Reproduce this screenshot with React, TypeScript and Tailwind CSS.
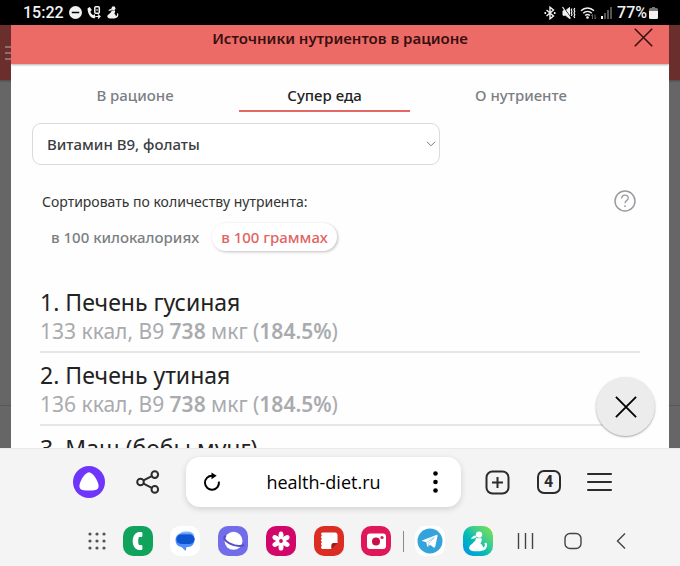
import { useState } from 'react';
import { clsx } from 'clsx';

const tabs = ['В рационе', 'Супер еда', 'О нутриенте'];

const sortModes = ['в 100 килокалориях', 'в 100 граммах'];

const foods = [
  { name: 'Печень гусиная', kcal: 133, amount: 738, percent: '184.5%' },
  { name: 'Печень утиная', kcal: 136, amount: 738, percent: '184.5%' },
  { name: 'Маш (бобы мунг)', kcal: 347, amount: 625, percent: '156.3%' },
];

const Figure = ({ className }: { className?: string }) => (
  <svg viewBox="0 0 20 20" className={className} fill="currentColor" aria-hidden="true">
    <circle cx="11.500" cy="3.400" r="3" />
    <path d="M9.800 4.500C7 3.800 4.800 5 3.800 7.600c1.600-.2 3.400-.4 4.600-1.400z" />
    <path d="M8.600 6.400c2 .8 3.600.6 5.200.2.500 2 .1 3.800-1 5.200 1.500.9 2.300 2.200 2.500 3.900 1.300-.4 1.900-1.400 1.700-2.900l-.4-1.400 2-.3c1.100 3.200-.1 6.500-3.200 7.400-3.200 1-8.600 1.100-11.200.2-2.400-.9-2.600-2.800-1.600-4.400.9-1.400 2.600-2 3.800-3.500 1.400-1.600 2.100-2.600 2.200-4.400z" />
  </svg>
);

const Cross = ({ className }: { className?: string }) => (
  <svg viewBox="0 0 24 24" className={className} fill="none" stroke="currentColor" strokeWidth="2" aria-hidden="true">
    <path d="M1 1 23 23M23 1 1 23" />
  </svg>
);

const StatusBar = () => (
  <div className="flex h-[25px] shrink-0 items-center justify-between bg-black pr-[22px] pl-[23px] font-['Roboto',sans-serif] text-base font-medium text-[#f2f2f2]">
    <div className="flex items-center gap-[5px]">
      <span>15:22</span>
      <svg viewBox="0 0 14 14" className="size-[13px]" aria-hidden="true">
        <circle cx="7" cy="7" r="7" fill="currentColor" />
        <path d="M3 7h8" stroke="#000" strokeWidth="1.600" />
      </svg>
      <svg viewBox="0 0 14 14" className="size-[14px]" fill="none" stroke="currentColor" aria-hidden="true">
        <path d="M.6 2.200 2.800 1l2 3-1.400 1.400c.4 1.800 1.400 3 2.800 3.800L7.600 8l1 3-1.400 1.400C3.600 12 .4 7.400.6 2.200z" fill="currentColor" stroke="none" />
        <rect x="7.800" y=".8" width="4.500" height="6.500" rx="1" strokeWidth="1.500" />
        <path d="M9 4h2M8.500 10.500h4.500M11 8.500l2 2-2 2" strokeWidth="1.200" />
      </svg>
      <Figure className="size-[13px]" />
    </div>
    <div className="flex items-center gap-1">
      <svg viewBox="0 0 12 14" className="h-[14px] w-[12px]" fill="none" stroke="currentColor" strokeWidth="1.400" aria-hidden="true">
        <path d="m2.500 4 7 6L6 12.800V1.200L9.500 4l-7 6" />
        <path d="M.5 7h1.600M9.900 7h1.600" strokeWidth="1.800" />
      </svg>
      <svg viewBox="0 0 14 14" className="ml-[2px] size-[14px]" fill="none" stroke="currentColor" aria-hidden="true">
        <path d="M1 4.800h2.500L7.500 1.500v11L3.500 9.200H1z" fill="currentColor" />
        <path d="m1.500 1 7.500 11" stroke="#000" />
        <path d="m.5 1 8 11.500" strokeWidth="1.200" />
        <path d="m10 2.500-.8 1.500.8 1.500-.8 1.500.8 1.500-.8 1.500M12.800 2l-.8 1.700.8 1.600-.8 1.700.8 1.700-.8 1.600.8 1.700" strokeWidth="1.200" />
      </svg>
      <svg viewBox="0 0 17 14" className="h-[14px] w-[17px]" fill="none" stroke="currentColor" aria-hidden="true">
        <path d="M1 4.800c3.800-3.700 9.200-3.700 13 0M3.200 7.200c2.500-2.400 6.100-2.400 8.600 0M5.200 9.500c1.400-1.300 3.200-1.300 4.600 0" strokeWidth="1.500" />
        <circle cx="7.500" cy="11.500" r="1.300" fill="currentColor" stroke="none" />
        <path d="M12.500 13V8.500l-1.300 1.600M15 8.500V13l1.300-1.600" stroke="#666" />
      </svg>
      <svg viewBox="0 0 12 12" className="size-[12px]" fill="#555" aria-hidden="true">
        <rect x="0" y="9" width="2" height="3" fill="#fff" />
        <rect x="3" y="6" width="2" height="6" />
        <rect x="6" y="3" width="2" height="9" />
        <rect x="9" y="0" width="2" height="12" />
      </svg>
      <div className="flex items-center gap-[2px]">
        <span>77%</span>
        <svg viewBox="0 0 9 12" className="h-[12px] w-[9px]" fill="currentColor" aria-hidden="true">
          <path d="M3 0h3v1h1.500Q9 1 9 2.500V4H0V2.500Q0 1 1.500 1H3z" fill="#777" />
          <path d="M0 4h9v6.500Q9 12 7.500 12h-6Q0 12 0 10.500z" />
        </svg>
      </div>
    </div>
  </div>
);

const FoodList = () => (
  <ol className="mx-[29px] leading-[29px]">
    {foods.map((food, i) => (
      <li key={food.name} className="border-b-2 border-[#e6e6e6] pt-[8px] pb-[5px]">
        <h2 className="text-[23px] text-[#222]">
          {i + 1}. {food.name}
        </h2>
        <p className="text-[21px] text-[#a9abae]">
          {food.kcal} ккал, B9 <b className="font-semibold">{food.amount}</b> мкг (
          <b className="font-semibold">{food.percent}</b>)
        </p>
      </li>
    ))}
  </ol>
);

const NutrientModal = () => {
  const [tab, setTab] = useState(1);
  const [sort, setSort] = useState(1);

  return (
    <main className="relative mx-[11px] h-full overflow-hidden bg-[#fefefe]">
      <header className="relative h-[39px] bg-[#ed6b66] text-center text-[#38100f] shadow-[0_1px_2px_rgba(0,0,0,0.3)]">
        <h1 className="text-[15px] leading-[26px] font-semibold">Источники нутриентов в рационе</h1>
        <button aria-label="Закрыть" className="absolute top-[3px] right-4">
          <Cross className="size-[19px]" />
        </button>
      </header>

      <nav className="mt-[17px] mr-[37px] ml-[20px] grid grid-cols-[208fr_171fr_222fr] text-[15px] font-medium">
        {tabs.map((label, i) => (
          <button
            key={label}
            onClick={() => setTab(i)}
            className={clsx(
              'h-[31px] border-b-2',
              i === tab ? 'border-[#e46763] text-[#222]' : 'border-transparent text-[#7b7f84]'
            )}
          >
            {label}
          </button>
        ))}
      </nav>

      <div className="relative mt-[11px] ml-[21px] w-[62%]">
        <select
          aria-label="Нутриент"
          className="block h-[42px] w-full appearance-none rounded-[9px] border border-[#d9dbdd] bg-white pl-[14px] text-[15px] font-medium text-[#3a3d40]"
        >
          <option>Витамин B9, фолаты</option>
        </select>
        <svg viewBox="0 0 10 6" className="pointer-events-none absolute top-[18px] right-1 h-[6px] w-[10px]" fill="none" stroke="#777" aria-hidden="true">
          <path d="m1 .8 4 4 4-4" />
        </svg>
      </div>

      <div className="mt-[25px] mr-[33px] ml-[31px] flex items-center justify-between">
        <span className="text-[14px] text-[#333]">Сортировать по количеству нутриента:</span>
        <button aria-label="Справка">
          <svg viewBox="0 0 22 22" className="size-[22px]" fill="none" stroke="#999b9e" strokeWidth="1.500" aria-hidden="true">
            <circle cx="11" cy="11" r="10" />
            <path d="M7.700 8.400c0-4.200 6.600-4.200 6.600-.4 0 2.400-3.300 2.400-3.300 5.300" strokeWidth="1.300" />
            <circle cx="11" cy="16.200" r=".9" fill="#999b9e" stroke="none" />
          </svg>
        </button>
      </div>

      <div className="mt-[11px] ml-[31px] flex gap-1 text-[15px] font-medium">
        {sortModes.map((label, i) => (
          <button
            key={label}
            onClick={() => setSort(i)}
            className={clsx(
              'h-[28px] rounded-full px-[9px]',
              i === sort ? 'bg-white text-[#e26462] shadow-[1px_1px_3px_rgba(0,0,0,0.25)]' : 'text-[#7b7f84]'
            )}
          >
            {label}
          </button>
        ))}
      </div>

      <div className="mt-[29px]">
        <FoodList />
      </div>

      <button
        aria-label="Закрыть окно"
        className="absolute right-[14px] bottom-[12px] flex size-[59px] items-center justify-center rounded-full bg-[#ececec] text-black shadow-[0_1px_2px_rgba(0,0,0,0.35)]"
      >
        <Cross className="size-[22px]" />
      </button>
    </main>
  );
};

const BrowserBar = () => (
  <div className="flex h-[50px] items-center pr-[55px] pl-[59px] text-[#2b2b2b]">
    <button aria-label="Алиса" className="flex w-[59px] justify-center">
      <svg viewBox="0 0 32 32" className="size-[32px]" aria-hidden="true">
        <circle cx="16" cy="16" r="16" fill="#6f35fb" />
        <path d="M16 6.200c3.800 0 9.400 9 9.600 13.800.1 4.600-5.200 4.600-9.600 4.600s-9.700 0-9.600-4.600C6.600 15.200 12.200 6.200 16 6.200z" fill="#fff" />
      </svg>
    </button>
    <button aria-label="Поделиться" className="flex w-[59px] justify-center">
      <svg viewBox="0 0 24 24" className="size-[24px]" fill="none" stroke="currentColor" strokeWidth="2" aria-hidden="true">
        <circle cx="4.500" cy="12" r="3.300" />
        <circle cx="18.800" cy="4.600" r="3.300" />
        <circle cx="18.800" cy="19.400" r="3.300" />
        <path d="m7.500 10.400 8.300-4.300M7.500 13.600l8.300 4.300" />
      </svg>
    </button>
    <div className="mr-[11px] ml-[9px] flex h-[50px] flex-1 items-center rounded-[14px] bg-white px-[10px] text-black shadow-[0_2px_6px_rgba(0,0,0,0.15)]">
      <button aria-label="Обновить" className="flex w-8 justify-center">
        <svg viewBox="0 0 20 20" className="size-[20px]" fill="none" stroke="currentColor" strokeWidth="2" aria-hidden="true">
          <path d="M10 3.700a7 7 0 1 0 6.900 6" />
          <path d="M9.500 .4v6.800l5.200-3.400z" fill="currentColor" stroke="none" />
        </svg>
      </button>
      <a href="#" className="flex-1 text-center font-['Open_Sans','Noto_Sans',sans-serif] text-[18px]">health-diet.ru</a>
      <button aria-label="Меню страницы" className="flex w-8 justify-center">
        <svg viewBox="0 0 5 22" className="h-[22px] w-[5px]" aria-hidden="true">
          <circle cx="2.500" cy="2.500" r="2.300" />
          <circle cx="2.500" cy="11" r="2.300" />
          <circle cx="2.500" cy="19.500" r="2.300" />
        </svg>
      </button>
    </div>
    <button aria-label="Новая вкладка" className="flex w-[51px] justify-center">
      <svg viewBox="0 0 25 25" className="size-[25px]" fill="none" stroke="currentColor" strokeWidth="2" aria-hidden="true">
        <rect x="1.500" y="1.500" width="22" height="22" rx="6" />
        <path d="M12.500 7v11M7 12.500h11" />
      </svg>
    </button>
    <button aria-label="Вкладки" className="flex w-[51px] justify-center">
      <span className="flex size-[24px] items-center justify-center rounded-[7px] border-2 border-[#2b2b2b] font-['Roboto',sans-serif] text-base font-bold">
        4
      </span>
    </button>
    <button aria-label="Меню" className="flex w-[51px] justify-center">
      <svg viewBox="0 0 25 20" className="h-[20px] w-[25px]" stroke="currentColor" strokeWidth="2" strokeLinecap="round" aria-hidden="true">
        <path d="M1 2h23M1 10h23M1 18h23" />
      </svg>
    </button>
  </div>
);

const appIcon = 'flex size-[30px] items-center justify-center rounded-[10px]';

const Dock = () => (
  <div className="mt-[19px] grid grid-cols-[34fr_repeat(6,48fr)_6fr_repeat(5,48fr)] place-items-center pr-[35px] pl-[80px]">
    <button aria-label="Все приложения">
      <svg viewBox="0 0 18 18" className="size-[18px]" fill="#555" aria-hidden="true">
        {[2, 9, 16].map(y => [2, 9, 16].map(x => <circle key={`${x}-${y}`} cx={x} cy={y} r="1.600" />))}
      </svg>
    </button>
    <button aria-label="Телефон" className={clsx(appIcon, 'bg-[#0fa35c]')}>
      <svg viewBox="0 0 30 30" className="size-[30px]" aria-hidden="true">
        <path d="M16.200 6h2q1.200 0 1.200 1.200v2.600q0 1.200-1.200 1.200H16c-1.100 2-1.100 6 0 8h2.200q1.200 0 1.200 1.200v2.600q0 1.200-1.200 1.200h-2C7.600 23.500 7.600 6.500 16.200 6z" fill="#fff" />
      </svg>
    </button>
    <button aria-label="Сообщения" className={clsx(appIcon, 'bg-white')}>
      <svg viewBox="0 0 30 30" className="size-[30px]" aria-hidden="true">
        <rect x="8.500" y="5.500" width="16" height="13" rx="6" fill="#82b1ff" />
        <path d="M11.500 7.500h7.500c7.500 0 7.500 13.500-1 13.500h-1.500L15.500 25 11.500 21C3.500 20.500 3.500 7.500 11.500 7.500z" fill="#4f8ff9" />
        <rect x="6.500" y="8.500" width="18" height="9.500" rx="4.700" fill="#0c55cf" />
      </svg>
    </button>
    <button aria-label="Интернет" className={clsx(appIcon, 'bg-[#716dea]')}>
      <svg viewBox="0 0 30 30" className="size-[30px]" aria-hidden="true">
        <circle cx="15.500" cy="14.800" r="9" fill="#fff" />
        <path d="M7.800 9.800c-6.500 4.200 10.200 12.800 18.500 9.200" fill="none" stroke="#5550bd" strokeWidth="2" />
      </svg>
    </button>
    <button aria-label="Галерея" className={clsx(appIcon, 'bg-[#d1076b]')}>
      <svg viewBox="0 0 30 30" className="size-[30px]" fill="#fff" aria-hidden="true">
        {[0, 60, 120, 180, 240, 300].map(a => (
          <ellipse key={a} cx="15" cy="9.300" rx="2.500" ry="3.900" transform={`rotate(${a} 15 15)`} />
        ))}
        <circle cx="15" cy="15" r="4" />
        <circle cx="15" cy="15" r="1.900" fill="#d1076b" />
      </svg>
    </button>
    <button aria-label="Заметки" className={clsx(appIcon, 'bg-[#dc2d24]')}>
      <svg viewBox="0 0 30 30" className="size-[30px]" aria-hidden="true">
        <path d="M8.500 6.500H21q2.500 0 2.500 2.500v8h-3.500q-2.500 0-2.500 2.500V23h-9q-1.500 0-1.500-1.500V8q0-1.500 1.500-1.500z" fill="#fff" />
        <path d="M17.500 23v-3.500q0-2.500 2.500-2.500h3.500z" fill="#98201a" />
        <path d="M6.800 8.500v14" stroke="#dc2d24" strokeWidth="1.800" strokeDasharray="1.700 1.700" />
      </svg>
    </button>
    <button aria-label="Камера" className={clsx(appIcon, 'bg-[#e0185a]')}>
      <svg viewBox="0 0 30 30" className="size-[30px]" aria-hidden="true">
        <rect x="6" y="7.500" width="19" height="15.500" rx="3" fill="#fff" />
        <circle cx="15" cy="15.500" r="4" fill="#c9104c" />
        <circle cx="21" cy="11.500" r="1.600" fill="#e0185a" />
      </svg>
    </button>
    <span className="h-[21px] w-px bg-[#8a8a8a]" />
    <button aria-label="Telegram" className={clsx(appIcon, 'bg-white')}>
      <svg viewBox="0 0 30 30" className="size-[30px]" aria-hidden="true">
        <circle cx="15" cy="15" r="12.500" fill="#34a3dc" />
        <path d="m7 14.600 14.300-5.700c.9-.3 1.400.3 1.200 1.200l-2.300 10.700c-.2.900-.9 1-1.600.6l-3.600-2.700-1.900 1.800c-.4.400-.9.200-1-.4l-.8-3.900-4.200-1.300c-.4-.1-.4-.2-.1-.3z" fill="#fff" />
        <path d="m11.800 16.200 7.500-4.700-5.800 6.300-.3 2.600" fill="none" stroke="#a9cbe2" strokeWidth=".9" />
      </svg>
    </button>
    <button aria-label="Здоровье" className={clsx(appIcon, 'bg-linear-to-tr from-[#0b8df0] via-[#14c3a6] to-[#7ee31a] text-white')}>
      <Figure className="size-[21px]" />
    </button>
    <button aria-label="Недавние">
      <svg viewBox="0 0 17 16" className="h-[16px] w-[17px]" stroke="#444" strokeWidth="1.400" aria-hidden="true">
        <path d="M1.500 0v16M8.500 0v16M15.500 0v16" />
      </svg>
    </button>
    <button aria-label="Домой">
      <svg viewBox="0 0 18 18" className="size-[18px]" fill="none" stroke="#444" strokeWidth="1.400" aria-hidden="true">
        <rect x="1" y="1.500" width="16" height="15" rx="5" />
      </svg>
    </button>
    <button aria-label="Назад">
      <svg viewBox="0 0 10 18" className="h-[18px] w-[10px]" fill="none" stroke="#444" strokeWidth="1.400" aria-hidden="true">
        <path d="M9 1.500 1.500 9 9 16.500" />
      </svg>
    </button>
  </div>
);

export default function App() {
  return (
    <div className="flex h-screen flex-col overflow-hidden bg-[#f4f4f4] font-['Noto_Sans',sans-serif]">
      <StatusBar />

      <div className="relative min-h-0 flex-1 overflow-hidden bg-[#666]">
        {/* Dimmed page behind the modal */}
        <div className="absolute inset-x-0 top-0 h-[55px] bg-[#6a2e2c] shadow-[0_1px_2px_rgba(0,0,0,0.3)]">
          <svg viewBox="0 0 14 16" className="absolute top-[20px] left-[5px] h-[16px] w-[14px]" stroke="#8e6d6c" strokeWidth="2" aria-hidden="true">
            <path d="M0 2h14M0 8h14M0 14h14" />
          </svg>
        </div>
        <div className="absolute inset-x-0 bottom-[42px] h-px bg-[#575757]" />
        <NutrientModal />
      </div>

      <footer className="shrink-0 border-t border-[#eaeaea] pt-2 pb-[10px]">
        <BrowserBar />
        <Dock />
      </footer>
    </div>
  );
}
